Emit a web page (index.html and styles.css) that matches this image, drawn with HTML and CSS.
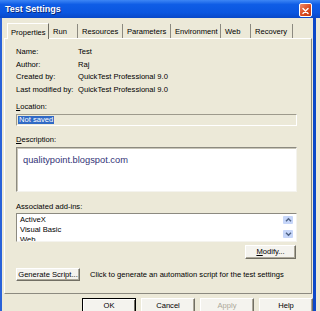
FILE: index.html
```html
<!DOCTYPE html>
<html>
<head>
<meta charset="utf-8">
<link rel="stylesheet" href="styles.css">
</head>
<body>
<div class="window">
  <div class="titlebar">
    <span class="title">Test Settings</span>
    <span class="close"><svg width="13" height="14" viewBox="0 0 13 14"><path d="M3.5 4L9.5 10M9.5 4L3.5 10" stroke="#fff" stroke-width="1.7" stroke-linecap="round"/></svg></span>
  </div>
  <div class="frame">
    <div class="tabs">
      <div class="tab active">Properties</div>
      <div class="tab">Run</div>
      <div class="tab">Resources</div>
      <div class="tab">Parameters</div>
      <div class="tab">Environment</div>
      <div class="tab">Web</div>
      <div class="tab">Recovery</div>
    </div>
    <div class="panel">
      <div class="info">
        <span>Name:</span><span>Test</span>
        <span>Author:</span><span>Raj</span>
        <span>Created by:</span><span>QuickTest Professional 9.0</span>
        <span>Last modified by:</span><span>QuickTest Professional 9.0</span>
      </div>
      <div class="label loc"><u>L</u>ocation:</div>
      <div class="field"><span class="sel">Not saved</span></div>
      <div class="label desc"><u>D</u>escription:</div>
      <div class="textarea">qualitypoint.blogspot.com</div>
      <div class="label addins">Associated add-ins:</div>
      <div class="list">
        <div class="items">
          <div>ActiveX</div>
          <div>Visual Basic</div>
          <div>Web</div>
        </div>
        <div class="scroll">
          <span class="arrow"><svg width="9" height="8" viewBox="0 0 9 8"><path d="M2 5.2L4.5 2.8L7 5.2" fill="none" stroke="#4d6185" stroke-width="1.4"/></svg></span>
          <span class="arrow"><svg width="9" height="8" viewBox="0 0 9 8"><path d="M2 2.8L4.5 5.2L7 2.8" fill="none" stroke="#4d6185" stroke-width="1.4"/></svg></span>
        </div>
      </div>
      <div class="modify-row"><span class="btn modify"><u>M</u>odify...</span></div>
      <div class="generate-row"><span class="btn gen">Generate Script...</span><span class="hint">Click to generate an automation script for the test settings</span></div>
    </div>
    <div class="buttons">
      <span class="btn dlg default">OK</span>
      <span class="btn dlg">Cancel</span>
      <span class="btn dlg disabled">Apply</span>
      <span class="btn dlg">Help</span>
    </div>
  </div>
</div>
</body>
</html>
```
FILE: styles.css
```css
* { box-sizing: border-box; margin: 0; padding: 0; }
body {
  width: 320px;
  height: 311px;
  overflow: hidden;
  background: #ece9d8;
  font-family: "Liberation Sans", Arial, sans-serif;
  font-size: 7.6px;
  color: #000;
}
.window {
  width: 320px;
  height: 311px;
  display: flex;
  flex-direction: column;
}
.titlebar {
  height: 18px;
  width: 320px;
  flex: none;
  display: flex;
  align-items: center;
  justify-content: space-between;
  padding: 0 8px 0 5px;
  background: linear-gradient(#3d86f5 0%, #0f5de6 25%, #0a56e0 70%, #0848c8 100%);
}
.title {
  color: #fff;
  font-weight: bold;
  font-size: 9px;
  text-shadow: 1px 1px 0 #0a2a7a;
}
.close {
  width: 13px;
  height: 14px;
  margin-top: 1px;
  border: 1px solid #fff;
  border-radius: 2px;
  background: linear-gradient(135deg, #f08a6a, #d8491e 55%, #c23a12);
  display: flex;
}
.frame {
  flex: 1;
  width: 316px;
  border-left: 2px solid #2a62d8;
  border-right: 3px solid #0d48c8;
  display: flex;
  flex-direction: column;
}
.tabs {
  display: flex;
  align-items: flex-end;
  height: 20px;
  flex: none;
  padding-left: 5px;
}
.tab {
  height: 14px;
  display: flex;
  align-items: center;
  padding-left: 4px;
  border-right: 1px solid #8c8a80;
  white-space: nowrap;
  overflow: hidden;
}
.tab.active {
  height: 16px;
  padding-top: 2px;
  padding-left: 3px;
  border-left: 1px solid #fff;
  border-top: 1px solid #fff;
  border-right: 1px solid #716f64;
  position: relative;
  margin-bottom: -1px;
  background: #ece9d8;
  z-index: 1;
}
.tab:nth-child(1) { width: 42px; }
.tab:nth-child(2) { width: 29px; }
.tab:nth-child(3) { width: 45px; }
.tab:nth-child(4) { width: 48px; }
.tab:nth-child(5) { width: 50px; }
.tab:nth-child(6) { width: 30px; }
.tab:nth-child(7) { width: 42px; }
.panel {
  margin-left: 2px;
  width: 308px;
  height: 256px;
  flex: none;
  border: 1px solid;
  border-color: #fff #8c8a80 #8c8a80 #fff;
  padding: 0 14px 0 11px;
  display: flex;
  flex-direction: column;
}
.info {
  margin-top: 7px;
  display: grid;
  grid-template-columns: 62px auto;
  line-height: 12.67px;
}
.label { line-height: 10px; height: 10px; }
.loc { margin-top: 5px; }
.desc { margin-top: 9px; }
.addins { margin-top: 10px; }
.field {
  margin-top: 2px;
  height: 12px;
  border: 1px solid;
  border-color: #9d9a8c #fff #fff #9d9a8c;
  background: #ece9d8;
  padding: 1px 0 0 1px;
  display: flex;
  align-items: flex-start;
}
.sel {
  background: #316ac5;
  color: #fff;
  line-height: 8px;
  height: 8px;
  padding: 0 1px;
}
.textarea {
  margin-top: 2px;
  height: 45px;
  border: 1px solid;
  border-color: #8c8a80 #f4f3ee #f4f3ee #8c8a80;
  box-shadow: inset 1px 1px 0 #c9c6b8;
  background: #fff;
  padding: 6px 0 0 6px;
  font-size: 9.3px;
  line-height: 12px;
  color: #333377;
}
.list {
  margin-top: 1px;
  height: 29px;
  border: 1px solid;
  border-color: #8c8a80 #f4f3ee #f4f3ee #8c8a80;
  background: #fff;
  display: flex;
  justify-content: space-between;
  overflow: hidden;
}
.items {
  padding: 1px 0 0 3px;
  line-height: 10px;
}
.scroll {
  display: flex;
  flex-direction: column;
  gap: 6px;
  padding: 2px 3px 0 0;
}
.arrow {
  width: 10px;
  height: 8px;
  background: #c6d6f9;
  border-radius: 1px;
  display: flex;
  justify-content: center;
}
.btn {
  display: flex;
  align-items: center;
  justify-content: center;
  background: #f4f3ee;
  border: 1px solid;
  border-color: #fff #716f64 #716f64 #fff;
  box-shadow: inset -1px -1px 0 #aca899;
  white-space: nowrap;
}
.modify-row {
  margin-top: 3px;
  display: flex;
  justify-content: flex-end;
  padding-right: 1px;
}
.modify { width: 51px; height: 14px; }
.generate-row {
  margin-top: 9px;
  display: flex;
  align-items: center;
  gap: 10px;
}
.gen { width: 64px; height: 13px; }
.buttons {
  margin-top: 4px;
  padding-left: 80px;
  display: flex;
  gap: 5px;
}
.dlg { width: 54px; height: 16px; padding-bottom: 2px; }
.default { border-color: #000; box-shadow: inset 1px 1px 0 #fff, inset -1px -1px 0 #716f64; }
.disabled { color: #aca899; }
```
